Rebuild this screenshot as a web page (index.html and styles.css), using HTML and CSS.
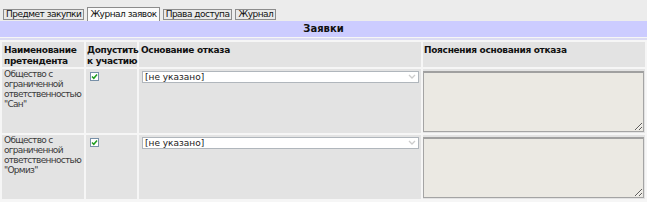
FILE: index.html
```html
<!DOCTYPE html>
<html>

<head>
    <meta charset="utf-8">
    <title>Заявки</title>
    <link rel="stylesheet" href="styles.css">
</head>

<body>
    <div class="tabs">
        <span class="tab">Предмет закупки</span>
        <span class="tab active">Журнал заявок</span>
        <span class="tab">Права доступа</span>
        <span class="tab">Журнал</span>
    </div>
    <div class="caption">Заявки</div>
    <div class="line"></div>
    <table class="bids">
        <tr>
            <th class="c-name">Наименование<br>претендента</th>
            <th class="c-ok">Допустить<br>к участию</th>
            <th class="c-reason">Основание отказа</th>
            <th class="c-note">Пояснения основания отказа</th>
        </tr>
        <tr>
            <td class="name">Общество с ограниченной ответственностью "Сан"</td>
            <td><span class="check"><svg width="7" height="7" viewBox="0 0 7 7"><path d="M1 3.5 L2.8 5.3 L6 1.5" fill="none" stroke="#1f9e1f" stroke-width="1.5"/></svg></span></td>
            <td><div class="select">[не указано]<span class="arrow"><svg width="8" height="6" viewBox="0 0 8 6"><path d="M1 1 L4 4 L7 1" fill="none" stroke="#cccccc" stroke-width="1.3"/></svg></span></div></td>
            <td class="notecell"><textarea class="note"></textarea></td>
        </tr>
        <tr>
            <td class="name">Общество с ограниченной ответственностью "Ормиз"</td>
            <td><span class="check"><svg width="7" height="7" viewBox="0 0 7 7"><path d="M1 3.5 L2.8 5.3 L6 1.5" fill="none" stroke="#1f9e1f" stroke-width="1.5"/></svg></span></td>
            <td><div class="select">[не указано]<span class="arrow"><svg width="8" height="6" viewBox="0 0 8 6"><path d="M1 1 L4 4 L7 1" fill="none" stroke="#cccccc" stroke-width="1.3"/></svg></span></div></td>
            <td class="notecell"><textarea class="note"></textarea></td>
        </tr>
    </table>
</body>

</html>
```

FILE: styles.css
```css
body {
    margin: 0;
    background: #f6f6f6;
    font-family: "DejaVu Sans", Verdana, sans-serif;
    font-size: 9px;
    line-height: 10px;
    color: #222222;
}

.tabs {
    display: flex;
    align-items: flex-start;
    gap: 3px;
    height: 14px;
    padding: 7px 0 0 3px;
    background: #ececec;
}

.tab {
    display: block;
    margin-top: 2px;
    height: 9px;
    line-height: 9px;
    padding: 0 2px;
    border: 1px solid #8c8c8c;
    background: #e9e9e9;
    color: #111111;
    letter-spacing: -0.5px;
    white-space: nowrap;
}

.tab.active {
    margin-top: 0;
    height: 13px;
    line-height: 12px;
    border-bottom: none;
    background: #fafafa;
}

.caption {
    height: 16px;
    line-height: 16px;
    background: #ccccff;
    text-align: center;
    font-weight: bold;
    font-size: 10px;
    color: #111111;
}

.line {
    height: 2px;
    margin-top: 1px;
    background: #dcdcf2;
}

table.bids {
    width: 647px;
    border-collapse: separate;
    border-spacing: 2px;
    table-layout: fixed;
}

table.bids th,
table.bids td {
    box-sizing: border-box;
    background: #e3e3e3;
    vertical-align: top;
    text-align: left;
    padding: 0 2px;
}

table.bids th {
    height: 24px;
    padding-top: 3px;
    font-weight: bold;
    line-height: 11px;
    letter-spacing: -0.3px;
    white-space: nowrap;
    color: #111111;
}

table.bids td {
    height: 64px;
    color: #3a3a3a;
}

.c-name { width: 82px; }
.c-ok { width: 51px; }
.c-reason { width: 282px; }
.c-note { width: 222px; }

table.bids th.c-ok {
    padding-left: 1px;
    padding-right: 0;
}

table.bids th.c-note {
    padding-left: 1px;
}

td.name {
    letter-spacing: -0.7px;
}

.check {
    display: block;
    width: 7px;
    height: 7px;
    margin: 3px 0 0 2px;
    border: 1px solid #7890a8;
    background: #ffffff;
}

.check svg {
    display: block;
}

.select {
    display: flex;
    justify-content: space-between;
    align-items: center;
    height: 10px;
    margin: 2px 0 0 1px;
    padding-left: 2px;
    border: 1px solid #b0b6bc;
    background: #ffffff;
    color: #222222;
    line-height: 10px;
}

.arrow {
    padding-right: 2px;
}

.arrow svg {
    display: block;
}

table.bids td.notecell {
    padding: 0 1px 0 0;
}

.note {
    display: block;
    box-sizing: border-box;
    width: 100%;
    height: 61px;
    margin: 2px 0 0;
    padding: 0;
    border: 1px solid #a4a4a4;
    border-top: 2px solid #a0a0a0;
    background: #ebe9e3;
}
```
